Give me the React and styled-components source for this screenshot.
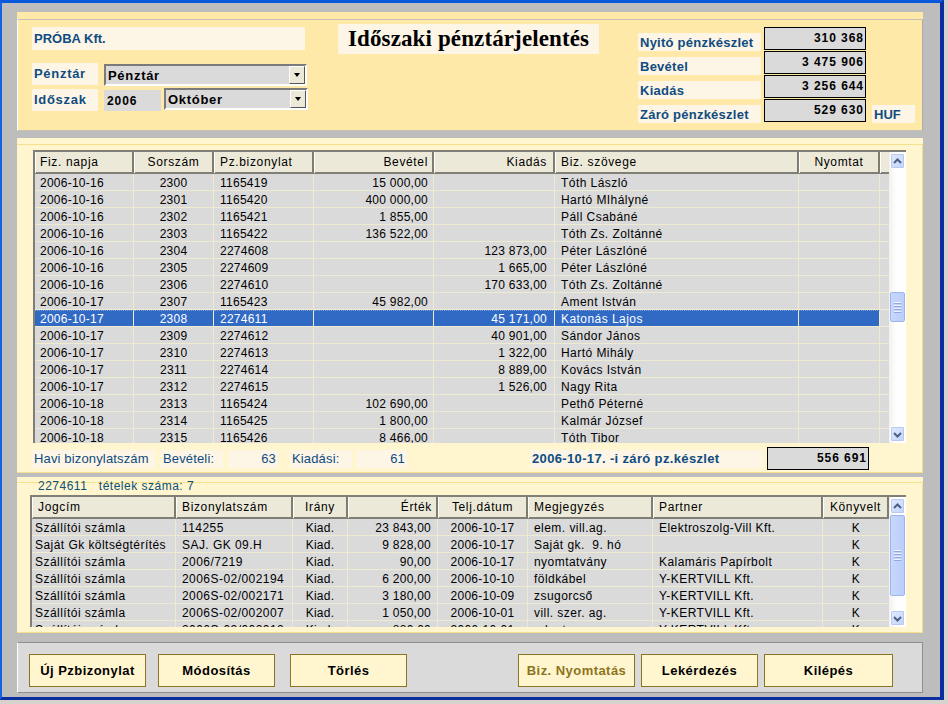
import React from 'react'
import styled, { createGlobalStyle } from 'styled-components'

const GlobalStyle = createGlobalStyle`
  html, body {
    margin: 0;
    padding: 0;
    background: #d6d3ce;
    font-family: "Liberation Sans", Arial, sans-serif;
    font-size: 12px;
  }
  * { box-sizing: border-box; }
`

const LABEL = '#0f4c81'
const CELL = '#dadada'
const PALE = '#fdf5e6'

const Window = styled.div`
  width: 944px;
  height: 700px;
  border-style: solid;
  border-color: #0a58dc #0b2f9e #0b2f9e #1463e0;
  border-width: 3px 4px 3px 2px;
  background: #bdbdbd;
  padding: 9px 17px 0 15px;
  display: flex;
  flex-direction: column;
`

const HeaderPanel = styled.div`
  height: 119px;
  background: #fee9a8;
  padding-top: 7px;
`

const HeaderInner = styled.div`
  height: 112px;
  border: 1px solid #c4c2b4;
  border-right-color: #b0aea0;
  border-left-color: #fff;
  padding: 4px 0 0 14px;
  display: flex;
  align-items: flex-start;
`

const LeftCol = styled.div`
  width: 276px;
  margin-top: 3px;
  display: flex;
  flex-direction: column;
`

const Company = styled.div`
  width: 273px;
  height: 23px;
  background: ${PALE};
  color: ${LABEL};
  font-weight: bold;
  font-size: 13px;
  line-height: 23px;
  padding-left: 2px;
  margin-bottom: 13px;
`

const FormRow = styled.div`
  display: flex;
  height: 24px;
  align-items: ${({ $end }) => ($end ? 'flex-end' : 'flex-start')};
`

const FormLabel = styled.div`
  width: 66px;
  height: 22px;
  margin-right: 6px;
  background: ${PALE};
  color: ${LABEL};
  font-weight: bold;
  font-size: 13px;
  letter-spacing: 0.7px;
  line-height: 22px;
  padding-left: 2px;
`

const Year = styled.div`
  width: 57px;
  height: 21px;
  margin-right: 3px;
  background: ${CELL};
  font-weight: bold;
  line-height: 22px;
  padding-left: 3px;
  letter-spacing: 0.9px;
`

const Combo = styled.div`
  width: ${({ $w }) => $w}px;
  height: 22px;
  margin-top: ${({ $mt }) => $mt || 0}px;
  margin-bottom: ${({ $mb }) => $mb || 0}px;
  background: ${CELL};
  border: 2px solid;
  border-color: #7b7b7b #fff #fff #7b7b7b;
  display: flex;
  align-items: center;
  justify-content: space-between;
  font-weight: bold;
  font-size: 13px;
  letter-spacing: 0.7px;
  padding-left: 2px;
`

const ComboButton = styled.div`
  width: 16px;
  height: 18px;
  background: #ece9d8;
  border: 1px solid;
  border-color: #fff #555 #555 #fff;
  display: flex;
  align-items: center;
  justify-content: center;
  &::after {
    content: '';
    border-style: solid;
    border-width: 4px 3.5px 0 3.5px;
    border-color: #000 transparent transparent transparent;
  }
`

const Title = styled.div`
  width: 261px;
  height: 30px;
  margin-left: 30px;
  background: ${PALE};
  font-family: "Liberation Serif", "Times New Roman", serif;
  font-weight: bold;
  font-size: 23px;
  letter-spacing: 0.12px;
  line-height: 29px;
  padding-left: 10px;
  white-space: nowrap;
`

const Stats = styled.div`
  margin-left: 39px;
  margin-top: 3px;
  display: flex;
  flex-direction: column;
`

const StatRow = styled.div`
  display: flex;
  height: 24px;
  align-items: flex-start;
`

const StatLabel = styled.div`
  width: 123px;
  height: 18px;
  margin-top: 6px;
  margin-right: 3px;
  background: ${PALE};
  color: ${LABEL};
  font-weight: bold;
  font-size: 13px;
  letter-spacing: 0.25px;
  line-height: 19px;
  padding-left: 2px;
`

const ValueBox = styled.div`
  width: 102px;
  height: 23px;
  margin-left: ${({ $gap }) => $gap || 0}px;
  border: 1px solid #000;
  background: ${CELL};
  font-weight: bold;
  letter-spacing: 0.95px;
  line-height: 20px;
  text-align: right;
  padding-right: 1px;
`

const Currency = styled.div`
  width: 43px;
  height: 18px;
  margin: 6px 0 0 6px;
  background: ${PALE};
  color: ${LABEL};
  font-weight: bold;
  font-size: 13px;
  line-height: 19px;
  padding-left: 2px;
`

const Panel = styled.div`
  background: #fff5cf;
  height: ${({ $h }) => $h}px;
  margin-top: ${({ $top }) => $top}px;
  padding-top: ${({ $pad }) => $pad}px;
`

const PanelInner = styled.div`
  height: 100%;
  border-top: 1px solid #f5e08c;
  border-right: 1px solid #f5e08c;
  border-bottom: 1px solid #f5e08c;
  padding-top: ${({ $pad }) => $pad || 0}px;
`

const LegendRow = styled.div`
  display: flex;
  align-items: flex-start;
  height: 13px;
  margin-top: -1px;
`

const LegendLine = styled.div`
  height: 1px;
  background: #f5e08c;
  flex: ${({ $grow }) => ($grow ? 1 : '0 0 9px')};
`

const LegendText = styled.div`
  color: #0a5078;
  font-size: 12px;
  line-height: 14px;
  margin-top: -3px;
  padding: 0 9px 0 12px;
  letter-spacing: 0.5px;
  white-space: pre;
`

const GridFrame = styled.div`
  margin-left: ${({ $left }) => $left}px;
  width: ${({ $w }) => $w}px;
  height: ${({ $h }) => $h}px;
  border-top: 2px solid #7f7f78;
  border-left: 2px solid #7f7f78;
  display: flex;
  overflow: hidden;
`

const GridBody = styled.div`
  flex: 1;
  overflow: hidden;
  background: ${CELL};
`

const HeaderRow = styled.div`
  display: grid;
  grid-template-columns: ${({ $cols }) => $cols.map((c) => `${c}px`).join(' ')};
  height: 22px;
  background: #ece9d8;
  border-bottom: 2px solid #7f7f78;
`

const HeaderCell = styled.div`
  border-left: 1px solid #fff;
  border-right: 2px solid #7f7d70;
  line-height: 21px;
  white-space: nowrap;
  letter-spacing: 0.65px;
  padding: 0 ${({ $pr }) => $pr || 4}px 0 ${({ $inset }) => $inset || 4}px;
  text-align: ${({ $align }) => $align || 'left'};
`

const FillerHead = styled.div`
  border-left: 1px solid #fff;
`

const Row = styled.div`
  display: grid;
  grid-template-columns: ${({ $cols }) => $cols.map((c) => `${c}px`).join(' ')};
  height: 17px;
  border-bottom: 1px solid #efebd0;
`

const Cell = styled.div`
  border-right: 1px solid #efebd0;
  border-top: ${({ $selected }) => ($selected ? '1px dotted #7f9fd8' : 'none')};
  background: ${({ $selected }) => ($selected ? '#316ac5' : CELL)};
  color: ${({ $selected }) => ($selected ? '#fff' : '#000')};
  line-height: 16px;
  white-space: pre;
  overflow: hidden;
  letter-spacing: ${({ $wide }) => ($wide ? '0.45px' : '0.25px')};
  padding-top: ${({ $selected }) => ($selected ? 0 : 1)}px;
  padding-left: ${({ $inset }) => $inset || 5}px;
  padding-right: ${({ $pr }) => $pr || 5}px;
  text-align: ${({ $align }) => $align || 'left'};
  &:last-child {
    border-right: none;
  }
`

const ScrollBar = styled.div`
  width: 17px;
  flex: none;
  background: linear-gradient(90deg, #f3f1ec, #fefefe 40%, #fff);
  display: flex;
  flex-direction: column;
  padding: 1px;
`

const ScrollButton = styled.div`
  height: 16px;
  flex: none;
  display: flex;
  align-items: center;
  justify-content: center;
  border: 1px solid #fff;
  border-radius: 2px;
  background: linear-gradient(135deg, #e1eafe, #c3d3fd);
  box-shadow: 0 0 0 1px #b9c9ef inset;
`

const ScrollThumb = styled.div`
  height: ${({ $h }) => $h}px;
  margin-top: ${({ $top }) => $top}px;
  flex: none;
  border: 1px solid #9eb6f0;
  border-radius: 2px;
  background: linear-gradient(90deg, #c9d7fd, #bccdfb);
  display: flex;
  flex-direction: column;
  align-items: center;
  justify-content: center;
  gap: 1px;
`

const ThumbLine = styled.div`
  width: 7px;
  height: 1px;
  background: #eef3fe;
  box-shadow: 0 1px 0 #8ea8e8;
  margin-bottom: 1px;
`

const ScrollFill = styled.div`
  flex: 1;
`

const Summary = styled.div`
  display: flex;
  align-items: flex-start;
  margin: 4px 0 0 15px;
`

const SummaryLabel = styled.div`
  width: ${({ $w }) => $w}px;
  height: 18px;
  margin-top: 3px;
  margin-left: ${({ $gap }) => $gap || 0}px;
  background: ${PALE};
  color: ${LABEL};
  font-size: 13px;
  letter-spacing: 0.15px;
  line-height: 18px;
  padding: 0 2px;
  text-align: ${({ $align }) => $align || 'left'};
`

const SummaryBold = styled(SummaryLabel)`
  font-weight: bold;
  letter-spacing: 0.35px;
`

const ButtonPanel = styled.div`
  height: 51px;
  margin-top: 9px;
  background: ${CELL};
  border: 1px solid #8f8f8f;
  border-left-color: #fff;
  padding: 11px 0 0 11px;
  display: flex;
  align-items: flex-start;
`

const ActionButton = styled.button`
  width: ${({ $w }) => $w || 117}px;
  height: 33px;
  margin-left: ${({ $gap }) => $gap || 0}px;
  background: #fff5cf;
  border: 1px solid #8b7425;
  color: ${({ $muted }) => ($muted ? '#8b7420' : '#000')};
  font-family: "Liberation Sans", Arial, sans-serif;
  font-weight: bold;
  font-size: 13px;
  letter-spacing: 0.45px;
  padding: 0;
  cursor: pointer;
`

const Chevron = ({ up }) => (
  <svg width="9" height="7" viewBox="0 0 9 7">
    <path d={up ? 'M1 5 L4.5 1.5 L8 5' : 'M1 2 L4.5 5.5 L8 2'} fill="none" stroke="#4d6185" strokeWidth="2" />
  </svg>
)

const Scroll = ({ top, thumb }) => (
  <ScrollBar>
    <ScrollButton><Chevron up /></ScrollButton>
    <ScrollThumb $top={top} $h={thumb}>
      <ThumbLine />
      <ThumbLine />
      <ThumbLine />
      <ThumbLine />
    </ScrollThumb>
    <ScrollFill />
    <ScrollButton><Chevron /></ScrollButton>
  </ScrollBar>
)

const mainCols = [99, 80, 100, 120, 121, 244, 81, 9]
const mainHead = [
  { t: 'Fiz. napja' },
  { t: 'Sorszám', a: 'center' },
  { t: 'Pz.bizonylat', i: 5 },
  { t: 'Bevétel', a: 'right' },
  { t: 'Kiadás', a: 'right', r: 6 },
  { t: 'Biz. szövege', i: 5 },
  { t: 'Nyomtat', a: 'center' },
]

const payments = [
  ['2006-10-16', '2300', '1165419', '15 000,00', '', 'Tóth László'],
  ['2006-10-16', '2301', '1165420', '400 000,00', '', 'Hartó MIhályné'],
  ['2006-10-16', '2302', '1165421', '1 855,00', '', 'Páll Csabáné'],
  ['2006-10-16', '2303', '1165422', '136 522,00', '', 'Tóth Zs. Zoltánné'],
  ['2006-10-16', '2304', '2274608', '', '123 873,00', 'Péter Lászlóné'],
  ['2006-10-16', '2305', '2274609', '', '1 665,00', 'Péter Lászlóné'],
  ['2006-10-16', '2306', '2274610', '', '170 633,00', 'Tóth Zs. Zoltánné'],
  ['2006-10-17', '2307', '1165423', '45 982,00', '', 'Ament István'],
  ['2006-10-17', '2308', '2274611', '', '45 171,00', 'Katonás Lajos'],
  ['2006-10-17', '2309', '2274612', '', '40 901,00', 'Sándor János'],
  ['2006-10-17', '2310', '2274613', '', '1 322,00', 'Hartó Mihály'],
  ['2006-10-17', '2311', '2274614', '', '8 889,00', 'Kovács István'],
  ['2006-10-17', '2312', '2274615', '', '1 526,00', 'Nagy Rita'],
  ['2006-10-18', '2313', '1165424', '102 690,00', '', 'Pethő Péterné'],
  ['2006-10-18', '2314', '1165425', '1 800,00', '', 'Kalmár József'],
  ['2006-10-18', '2315', '1165426', '8 466,00', '', 'Tóth Tibor'],
]

const itemCols = [144, 117, 55, 90, 90, 125, 170, 66]
const itemHead = [
  { t: 'Jogcím', i: 5 },
  { t: 'Bizonylatszám', i: 5 },
  { t: 'Irány', a: 'center' },
  { t: 'Érték', a: 'right' },
  { t: 'Telj.dátum', a: 'center' },
  { t: 'Megjegyzés', i: 5 },
  { t: 'Partner', i: 5 },
  { t: 'Könyvelt', a: 'center' },
]

const items = [
  ['Szállítói számla', '114255', 'Kiad.', '23 843,00', '2006-10-17', 'elem. vill.ag.', 'Elektroszolg-Vill Kft.', 'K'],
  ['Saját Gk költségtérítés', 'SAJ. GK 09.H', 'Kiad.', '9 828,00', '2006-10-17', 'Saját gk.  9. hó', '', 'K'],
  ['Szállítói számla', '2006/7219', 'Kiad.', '90,00', '2006-10-17', 'nyomtatvány', 'Kalamáris Papírbolt', 'K'],
  ['Szállítói számla', '2006S-02/002194', 'Kiad.', '6 200,00', '2006-10-10', 'földkábel', 'Y-KERTVILL Kft.', 'K'],
  ['Szállítói számla', '2006S-02/002171', 'Kiad.', '3 180,00', '2006-10-09', 'zsugorcső', 'Y-KERTVILL Kft.', 'K'],
  ['Szállítói számla', '2006S-02/002007', 'Kiad.', '1 050,00', '2006-10-01', 'vill. szer. ag.', 'Y-KERTVILL Kft.', 'K'],
  ['Szállítói számla', '2006S-02/002012', 'Kiad.', '880,00', '2006-10-01', 'adapter', 'Y-KERTVILL Kft.', 'K'],
]

const stats = [
  ['Nyitó pénzkészlet', '310 368'],
  ['Bevétel', '3 475 906'],
  ['Kiadás', '3 256 644'],
  ['Záró pénzkészlet', '529 630'],
]

function App() {
  return (
    <>
      <GlobalStyle />
      <Window>
        <HeaderPanel>
          <HeaderInner>
            <LeftCol>
              <Company>PRÓBA Kft.</Company>
              <FormRow>
                <FormLabel>Pénztár</FormLabel>
                <Combo $w={203} $mt={1}>
                  Pénztár
                  <ComboButton />
                </Combo>
              </FormRow>
              <FormRow $end>
                <FormLabel>Időszak</FormLabel>
                <Year>2006</Year>
                <Combo $w={144} $mb={1}>
                  Október
                  <ComboButton />
                </Combo>
              </FormRow>
            </LeftCol>
            <Title>Időszaki pénztárjelentés</Title>
            <Stats>
              {stats.map(([label, value], i) => (
                <StatRow key={label}>
                  <StatLabel>{label}</StatLabel>
                  <ValueBox>{value}</ValueBox>
                  {i === 3 && <Currency>HUF</Currency>}
                </StatRow>
              ))}
            </Stats>
          </HeaderInner>
        </HeaderPanel>

        <Panel $h={335} $top={7} $pad={6}>
          <PanelInner $pad={5}>
            <GridFrame $left={16} $w={873} $h={293}>
              <GridBody>
                <HeaderRow $cols={mainCols}>
                  {mainHead.map((h) => (
                    <HeaderCell key={h.t} $align={h.a} $inset={h.i} $pr={h.r}>{h.t}</HeaderCell>
                  ))}
                  <FillerHead />
                </HeaderRow>
                {payments.map((p) => {
                  const sel = p[1] === '2308'
                  return (
                    <Row key={p[1]} $cols={mainCols}>
                      <Cell $selected={sel}>{p[0]}</Cell>
                      <Cell $selected={sel} $align="center">{p[1]}</Cell>
                      <Cell $selected={sel} $inset={6}>{p[2]}</Cell>
                      <Cell $selected={sel} $align="right">{p[3]}</Cell>
                      <Cell $selected={sel} $align="right" $pr={7}>{p[4]}</Cell>
                      <Cell $selected={sel} $inset={6} $wide>{p[5]}</Cell>
                      <Cell $selected={sel} />
                      <Cell />
                    </Row>
                  )
                })}
              </GridBody>
              <Scroll top={123} thumb={30} />
            </GridFrame>
            <Summary>
              <SummaryLabel $w={123}>Havi bizonylatszám</SummaryLabel>
              <SummaryLabel $w={62} $gap={6}>Bevételi:</SummaryLabel>
              <SummaryLabel $w={50} $gap={5} $align="right">63</SummaryLabel>
              <SummaryLabel $w={62} $gap={12}>Kiadási:</SummaryLabel>
              <SummaryLabel $w={51} $gap={4} $align="right">61</SummaryLabel>
              <SummaryBold $w={233} $gap={123}>2006-10-17. -i záró pz.készlet</SummaryBold>
              <ValueBox $gap={4}>556 691</ValueBox>
            </Summary>
          </PanelInner>
        </Panel>

        <Panel $h={156} $top={4} $pad={5}>
          <PanelInner>
            <LegendRow>
              <LegendLine />
              <LegendText>2274611   tételek száma: 7</LegendText>
              <LegendLine $grow />
            </LegendRow>
            <GridFrame $left={13} $w={876} $h={132}>
              <GridBody>
                <HeaderRow $cols={itemCols}>
                  {itemHead.map((h) => (
                    <HeaderCell key={h.t} $align={h.a} $inset={h.i}>{h.t}</HeaderCell>
                  ))}
                </HeaderRow>
                {items.map((it, i) => (
                  <Row key={i} $cols={itemCols}>
                    <Cell $inset={3} $wide>{it[0]}</Cell>
                    <Cell $inset={6} $wide>{it[1]}</Cell>
                    <Cell $align="center">{it[2]}</Cell>
                    <Cell $align="right" $pr={6}>{it[3]}</Cell>
                    <Cell $align="center">{it[4]}</Cell>
                    <Cell $inset={6} $wide>{it[5]}</Cell>
                    <Cell $inset={6} $wide>{it[6]}</Cell>
                    <Cell $align="center">{it[7]}</Cell>
                  </Row>
                ))}
              </GridBody>
              <Scroll top={1} thumb={81} />
            </GridFrame>
          </PanelInner>
        </Panel>

        <ButtonPanel>
          <ActionButton>Új Pzbizonylat</ActionButton>
          <ActionButton $gap={12}>Módosítás</ActionButton>
          <ActionButton $gap={15}>Törlés</ActionButton>
          <ActionButton $gap={111} $muted>Biz. Nyomtatás</ActionButton>
          <ActionButton $gap={6}>Lekérdezés</ActionButton>
          <ActionButton $gap={6} $w={129}>Kilépés</ActionButton>
        </ButtonPanel>
      </Window>
    </>
  )
}

export default App
